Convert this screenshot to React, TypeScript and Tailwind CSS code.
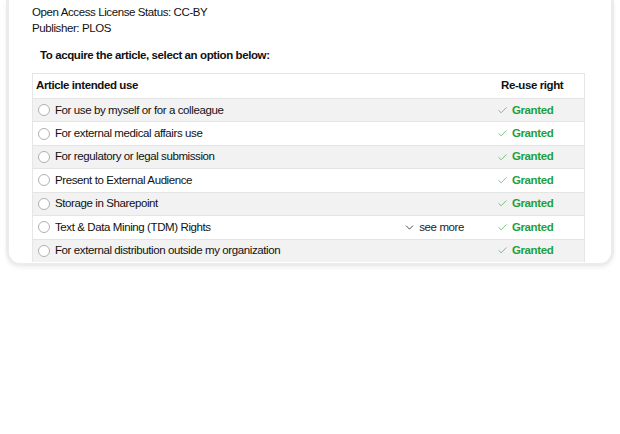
import { Check, ChevronDown } from "lucide-react";

const rows = [
  { label: "For use by myself or for a colleague" },
  { label: "For external medical affairs use" },
  { label: "For regulatory or legal submission" },
  { label: "Present to External Audience" },
  { label: "Storage in Sharepoint" },
  { label: "Text & Data Mining (TDM) Rights", more: true },
  { label: "For external distribution outside my organization" },
];

export default function App() {
  return (
    <div className="w-[620px] h-[434px] bg-white font-['Liberation_Sans',Arial,sans-serif] text-[#111111] tracking-[-0.4px]">
      <div className="px-[6px]">
        <div className="border-x-[3px] border-b-[3px] border-[#ececec] rounded-b-[14px] shadow-[0_2px_4px_rgba(0,0,0,0.06)] pl-[23px] pr-[26px] pt-[4px] pb-[1px]">
          <p className="text-[11.5px] leading-4">Open Access License Status: CC-BY</p>
          <p className="text-[11.5px] leading-4">Publisher: PLOS</p>
          <p className="mt-[11px] pl-2 text-[11.5px] leading-4 font-bold">
            To acquire the article, select an option below:
          </p>

          <div className="mt-[10px] border border-[#e6e6e6] border-b-0 text-[11.5px]">
            <div className="flex items-center h-6 font-bold">
              <div className="flex-1 pl-[3px]">Article intended use</div>
              <div className="w-[87px] pl-[4px]">Re-use right</div>
            </div>
            {rows.map((r, i) => (
              <div
                key={r.label}
                className={`flex items-center h-[23.43px] border-t border-[#e4e4e4] ${
                  i % 2 === 0 ? "bg-[#f2f2f2]" : "bg-white"
                }`}
              >
                <div className="flex-1 flex items-center pl-[5px] gap-[5px]">
                  <span className="w-[12px] h-[12px] rounded-full border border-[#b0b0b0] bg-white" />
                  <span>{r.label}</span>
                </div>
                {r.more && (
                  <div className="flex items-center gap-[3px] mr-[33px] text-[#222222]">
                    <ChevronDown size={13} strokeWidth={1.5} />
                    <span>see more</span>
                  </div>
                )}
                <div className="w-[87px] flex items-center gap-[4px] text-[#1f9f3d] font-bold">
                  <Check size={11} strokeWidth={1.5} className="text-[#3aaa4f]" />
                  <span>Granted</span>
                </div>
              </div>
            ))}
          </div>
        </div>
      </div>
    </div>
  );
}
